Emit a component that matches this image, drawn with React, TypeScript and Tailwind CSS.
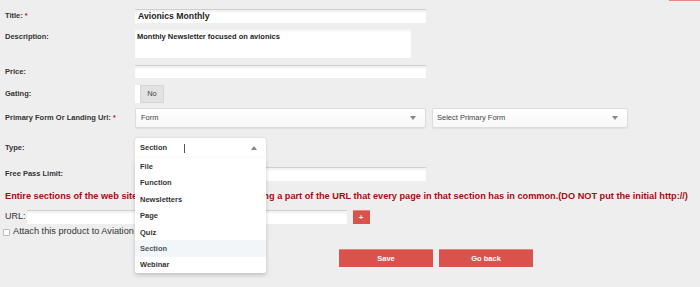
const types = ["File", "Function", "Newsletters", "Page", "Quiz", "Section", "Webinar"];

function Label({ text, req }: { text: string; req?: boolean }) {
  return (
    <div className="w-[130px] shrink-0 text-[7.5px] font-bold text-[#333]">
      {text}
      {req && <span className="text-[#d01010]"> *</span>}
    </div>
  );
}

function Caret({ up }: { up?: boolean }) {
  return (
    <svg width="6" height="4" viewBox="0 0 6 4" className="shrink-0">
      <path d={up ? "M0 4 L3 0 L6 4 Z" : "M0 0 L6 0 L3 4 Z"} fill="#888" />
    </svg>
  );
}

function TextInput({ w, value }: { w: string; value?: string }) {
  return (
    <div
      className={`${w} h-full bg-white border-t border-[#cfcfcf] shadow-[inset_0_2px_2px_rgba(0,0,0,0.06)] px-[3px] flex items-center text-[8.7px] font-bold text-[#222]`}
    >
      {value}
    </div>
  );
}

export default function App() {
  return (
    <div
      className="w-[700px] h-[287px] bg-[#eeeeee] overflow-hidden text-[#333]"
      style={{ fontFamily: '"Liberation Sans", Arial, sans-serif' }}
    >
      <div className="h-px flex">
        <div className="ml-auto w-[31px] bg-[#e8877f]" />
      </div>

      <div className="pl-[5px]">
        <div className="mt-[8px] h-[14px] flex items-center">
          <Label text="Title:" req />
          <TextInput w="w-[291px]" value="Avionics Monthly" />
        </div>

        <div className="mt-[6px] h-[29px] flex items-start">
          <div className="pt-[2px]">
            <Label text="Description:" />
          </div>
          <div className="w-[276px] h-full bg-white shadow-[inset_0_2px_2px_rgba(0,0,0,0.05)] px-[2px] pt-[2px] text-[7.5px] font-bold text-[#222]">
            Monthly Newsletter focused on avionics
          </div>
        </div>

        <div className="mt-[7px] h-[13px] flex items-center">
          <Label text="Price:" />
          <TextInput w="w-[291px]" />
        </div>

        <div className="mt-[7px] h-[18px] flex items-center">
          <Label text="Gating:" />
          <div className="h-full flex">
            <div className="w-[5px] bg-white" />
            <div className="w-[24px] bg-[#e2e2e2] border border-[#d6d6d6] flex items-center justify-center text-[7.5px] text-[#444]">
              No
            </div>
          </div>
        </div>

        <div className="mt-[5px] h-[20px] flex items-center">
          <Label text="Primary Form Or Landing Url:" req />
          <div className="w-[291px] h-full bg-gradient-to-b from-white to-[#f7f7f7] border border-[#dcdcdc] rounded-[2px] shadow-[0_1px_1px_rgba(0,0,0,0.06)] flex items-center justify-between pl-[5px] pr-[9px] text-[7.5px] text-[#444]">
            <span>Form</span>
            <Caret />
          </div>
          <div className="ml-[6px] w-[196px] h-full bg-gradient-to-b from-white to-[#f7f7f7] border border-[#dcdcdc] rounded-[2px] shadow-[0_1px_1px_rgba(0,0,0,0.06)] flex items-center justify-between pl-[4px] pr-[9px] text-[7.5px] text-[#444]">
            <span>Select Primary Form</span>
            <Caret />
          </div>
        </div>

        <div className="mt-[10px] h-[20px] flex items-center">
          <Label text="Type:" />
          <div className="relative w-[131px] h-full z-10">
            <div className="h-full bg-white rounded-t-[3px] shadow-[0_0_3px_rgba(0,0,0,0.15)] flex items-center pl-[5px] pr-[9px] text-[7.5px] font-bold text-[#333]">
              <span>Section</span>
              <span className="ml-[17px] w-px h-[9px] bg-[#555]" />
              <span className="ml-auto">
                <Caret up />
              </span>
            </div>
            <div className="absolute left-0 top-full w-full bg-white shadow-[0_2px_4px_rgba(0,0,0,0.2)] rounded-b-[2px] pt-[0.5px]">
              {types.map((t) => (
                <div
                  key={t}
                  className={`h-[16.4px] flex items-center pl-[5px] text-[7.5px] font-bold ${
                    t === "Section" ? "bg-[#f2f6f9] text-[#4a5560]" : "text-[#333]"
                  }`}
                >
                  {t}
                </div>
              ))}
            </div>
          </div>
        </div>

        <div className="mt-[9px] h-[14px] flex items-center">
          <Label text="Free Pass Limit:" />
          <TextInput w="w-[291px]" />
        </div>

        <div className="mt-[10px] h-[12px] flex items-center whitespace-nowrap text-[9.2px] font-bold text-[#a50d12]">
          Entire sections of the web site can be restricted by specifying a part of the URL that every page in that section has in common.(DO NOT put the initial http://)
        </div>

        <div className="mt-[7px] h-[14px] flex items-center">
          <span className="text-[9px] text-[#333] mr-[1px]">URL:</span>
          <TextInput w="w-[320px]" />
          <button className="ml-[6px] w-[17px] h-full bg-[#d9524b] border-t border-[#e9837c] text-white text-[8px] font-bold flex items-center justify-center leading-none">
            +
          </button>
        </div>

        <div className="mt-[2px] h-[12px] flex items-center">
          <span className="-ml-[2px] w-[7px] h-[7px] bg-white border border-[#bbb] rounded-[1px]" />
          <span className="ml-[3px] text-[9.2px] text-[#333]">Attach this product to Aviation Week Network</span>
        </div>

        <div className="mt-[11px] h-[18px] flex gap-[6px] ml-[334px]">
          <button className="w-[94px] h-full bg-[#d9524b] border-t border-[#e7847d] text-white text-[7.5px] font-bold">
            Save
          </button>
          <button className="w-[94px] h-full bg-[#d9524b] border-t border-[#e7847d] text-white text-[7.5px] font-bold">
            Go back
          </button>
        </div>
      </div>
    </div>
  );
}
